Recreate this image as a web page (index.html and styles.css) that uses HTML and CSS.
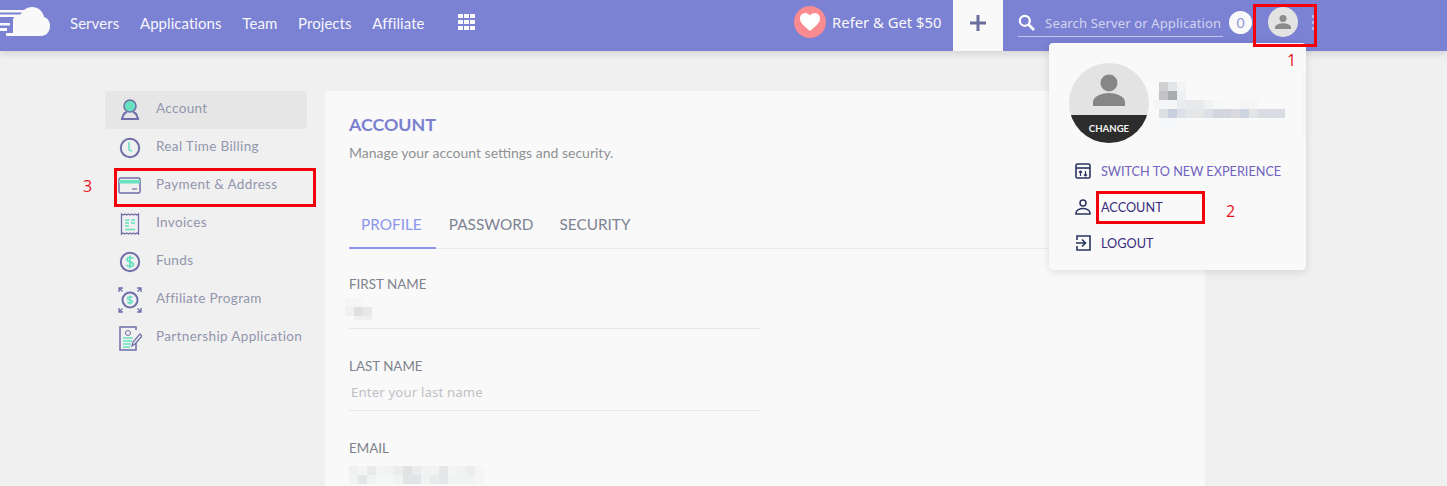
FILE: index.html
```html
<!DOCTYPE html>
<html lang="en">
<head>
<meta charset="utf-8">
<title>Account</title>
<link rel="stylesheet" href="styles.css">
</head>
<body>
<header class="topbar">
  <svg class="logo" width="51" height="30" viewBox="0 7 51 30"><path fill="#f9f9f9" d="M13 36V20c0-3 4-5 8-6 2-4 6-7 11-7 6 0 11 4 12 10 4 1 6 5 6 9 0 6-4 10-9 10zM0 10h24v2.500H0zM0 14.500h19V17H0zM0 23h10v2.500H0zM0 28h7v3H0zM6 33h8v3H6z"/></svg>
  <nav class="nav">
    <a class="nav-link">Servers</a>
    <a class="nav-link">Applications</a>
    <a class="nav-link">Team</a>
    <a class="nav-link">Projects</a>
    <a class="nav-link">Affiliate</a>
  </nav>
  <svg class="apps" width="17" height="17" viewBox="0 0 17 17" fill="#f9f9f9"><rect width="5" height="4"/><rect x="6" width="5" height="4"/><rect x="12" width="5" height="4"/><rect y="6" width="5" height="4"/><rect x="6" y="6" width="5" height="4"/><rect x="12" y="6" width="5" height="4"/><rect y="12" width="5" height="4"/><rect x="6" y="12" width="5" height="4"/><rect x="12" y="12" width="5" height="4"/></svg>
  <div class="refer">
    <span class="heart"><svg width="20" height="18" viewBox="0 0 20 18"><path fill="#fff" d="M10 18C4 13 0 10 0 5.500 0 2.300 2.400 0 5.300 0 7.200 0 9 1 10 2.600 11 1 12.800 0 14.700 0 17.600 0 20 2.300 20 5.500 20 10 16 13 10 18z"/></svg></span>
    <span class="refer-text">Refer &amp; Get $50</span>
  </div>
  <div class="add"><svg width="18" height="18" viewBox="0 0 18 18"><path fill="#6b6f9e" d="M7.500 1h3v6.500H17v3h-6.500V17h-3v-6.500H1v-3h6.500z"/></svg></div>
  <div class="search">
    <svg width="17" height="17" viewBox="0 0 17 17"><circle cx="6.800" cy="6.800" r="5" fill="none" stroke="#fff" stroke-width="2.200"/><path d="M10.500 10.500 16 16" stroke="#fff" stroke-width="2.600"/></svg>
    <span class="search-text">Search Server or Application</span>
  </div>
  <span class="count">0</span>
  <span class="avatar-small"><svg width="16" height="14" viewBox="0 0 16 14"><circle cx="8" cy="3.500" r="3.500" fill="#8c8c8c"/><path fill="#8c8c8c" d="M0 14v-2c0-2.500 5-3.800 8-3.800s8 1.300 8 3.800v2z"/></svg></span>
  <span class="dots"><i></i><i></i><i></i></span>
</header>

<main class="page">
  <aside class="side">
    <a class="side-item side-active">
      <svg class="side-icon" width="24" height="24" viewBox="0 0 24 24"><circle cx="12" cy="8" r="6" fill="#67e0c0" stroke="#6f6ea8" stroke-width="1.500"/><path d="M4 21l1-3c.5-2 2.500-3.500 4-4M20 21l-1-3c-.5-2-2.500-3.500-4-4M3 21h18" fill="none" stroke="#6f6ea8" stroke-width="2"/></svg>
      <span>Account</span>
    </a>
    <a class="side-item">
      <svg class="side-icon" width="24" height="24" viewBox="0 0 24 24"><circle cx="12" cy="12" r="9.200" fill="none" stroke="#6f6ea8" stroke-width="2"/><path d="M11 6v8l3 1" fill="none" stroke="#67e0c0" stroke-width="1.500"/></svg>
      <span>Real Time Billing</span>
    </a>
    <a class="side-item">
      <svg class="side-icon" width="24" height="24" viewBox="0 0 24 24"><rect x="1" y="4" width="21" height="15" rx="1.500" fill="none" stroke="#6f6ea8" stroke-width="1.500"/><rect x="1" y="6" width="21" height="3.500" fill="#67e0c0"/><path d="M14 15h5" stroke="#6f6ea8" stroke-width="1.200"/></svg>
      <span>Payment &amp; Address</span>
    </a>
    <a class="side-item">
      <svg class="side-icon" width="24" height="24" viewBox="0 0 24 24"><path d="M3.500 2l1.700 1 1.700-1 1.700 1 1.700-1L12 3l1.700-1 1.700 1 1.700-1 1.700 1 1.700-1V22l-1.700-1-1.700 1-1.700-1-1.700 1-1.700-1-1.700 1-1.700-1-1.700 1-1.700-1-1.700 1z" fill="none" stroke="#6f6ea8" stroke-width="1.300"/><path d="M7 8h4M7 11h4M7 14h4M13 8h4M13 11h4M7 17.500h10" stroke="#67e0c0" stroke-width="1.600"/></svg>
      <span>Invoices</span>
    </a>
    <a class="side-item">
      <svg class="side-icon" width="24" height="24" viewBox="0 0 24 24"><circle cx="12" cy="12" r="9.200" fill="none" stroke="#6f6ea8" stroke-width="2"/><path d="M15.500 8.500c-1-1.500-6-1.800-6.500.8-.5 3 6.800 2 6.500 5.200-.3 2.500-5.500 2.300-7 .5M12 5.500v13" fill="none" stroke="#67e0c0" stroke-width="1.800"/></svg>
      <span>Funds</span>
    </a>
    <a class="side-item">
      <svg class="side-icon" width="24" height="26" viewBox="0 0 24 26"><circle cx="12" cy="13" r="7.500" fill="none" stroke="#6f6ea8" stroke-width="2"/><path d="M14.500 10.500c-1-1-4.500-1-5 .8-.3 2 5.200 1.500 5 3.700-.3 1.800-4 1.500-5.200.3M12 8.500v9" fill="none" stroke="#67e0c0" stroke-width="1.500"/><path d="M1 5V1h4M1 1l3.500 3.500M23 5V1h-4M23 1l-3.500 3.500M1 21v4h4M1 25l3.500-3.500M23 21v4h-4M23 25l-3.500-3.500" fill="none" stroke="#6f6ea8" stroke-width="1.300"/></svg>
      <span>Affiliate Program</span>
    </a>
    <a class="side-item">
      <svg class="side-icon" width="24" height="25" viewBox="0 0 24 25"><path d="M18 4V1H2v23h16v-8" fill="none" stroke="#6f6ea8" stroke-width="1.500"/><circle cx="10" cy="7" r="2.500" fill="none" stroke="#6f6ea8"/><path d="M5 12h10M5 15h9M5 18h8M5 21h7" stroke="#67e0c0" stroke-width="1.300"/><path d="M14 20l1-4 7-8 2 2-7 8z" fill="#f0f0f0" stroke="#6f6ea8" stroke-width="1.200"/></svg>
      <span>Partnership Application</span>
    </a>
  </aside>

  <section class="panel">
    <h1 class="panel-title">ACCOUNT</h1>
    <p class="panel-sub">Manage your account settings and security.</p>
    <div class="tabs">
      <a class="tab tab-active">PROFILE</a>
      <a class="tab">PASSWORD</a>
      <a class="tab">SECURITY</a>
    </div>
    <div class="field">
      <label class="field-label">FIRST NAME</label>
      <div class="field-value">
        <svg class="mosaic-first" width="27" height="22" viewBox="0 0 27 22"><rect x="0" y="0" width="18" height="9" fill="#f5f5f5"/><rect x="0" y="9" width="9" height="9" fill="#f0f0f1"/><rect x="9" y="9" width="9" height="9" fill="#e2dfe1"/><rect x="18" y="9" width="9" height="9" fill="#e6e8e9"/><rect x="9" y="18" width="9" height="4" fill="#f0f0f1"/><rect x="18" y="18" width="9" height="4" fill="#efefef"/></svg>
      </div>
    </div>
    <div class="field">
      <label class="field-label">LAST NAME</label>
      <div class="field-value"><span class="placeholder">Enter your last name</span></div>
    </div>
    <div class="field">
      <label class="field-label">EMAIL</label>
      <div class="field-value field-open">
        <svg width="135" height="18" viewBox="0 0 135 18"><rect width="135" height="18" fill="#f1f2f2"/><rect x="0" width="9" height="9" fill="#eef0f1"/><rect x="9" width="9" height="9" fill="#f3f4f4"/><rect x="18" width="9" height="9" fill="#e9eaeb"/><rect x="27" width="9" height="9" fill="#f3f4f4"/><rect x="45" width="9" height="9" fill="#ebecec"/><rect x="54" width="9" height="9" fill="#e1e2e3"/><rect x="63" width="9" height="9" fill="#eaecee"/><rect x="90" width="9" height="9" fill="#e5e6e8"/><rect x="99" width="9" height="9" fill="#f3f4f4"/><rect x="117" width="9" height="9" fill="#ecedee"/><rect x="126" width="9" height="18" fill="#f5f5f6"/><rect x="9" y="9" width="9" height="9" fill="#e5e6e7"/><rect x="27" y="9" width="18" height="9" fill="#f5f6f6"/><rect x="54" y="9" width="9" height="9" fill="#e3e4e6"/><rect x="63" y="9" width="9" height="9" fill="#e1e4e6"/><rect x="81" y="9" width="9" height="9" fill="#e9eaec"/><rect x="90" y="9" width="9" height="9" fill="#e6e7e9"/></svg>
      </div>
    </div>
  </section>
</main>

<div class="menu">
  <div class="menu-user">
    <div class="menu-avatar">
      <svg width="34" height="34" viewBox="0 0 34 34"><circle cx="17" cy="9" r="8.500" fill="#868686"/><path fill="#868686" d="M1 32v-4c0-6 10-9 16-9s16 3 16 9v4z"/></svg>
      <span class="menu-change">CHANGE</span>
    </div>
    <svg class="menu-mosaic" width="131" height="45" viewBox="0 0 131 45"><rect x="5" width="9" height="9" fill="#d0d0d3"/><rect x="14" width="9" height="9" fill="#e1e5e8"/><rect x="23" width="9" height="9" fill="#f3f4f4"/><rect x="5" y="9" width="9" height="9" fill="#c3c3c7"/><rect x="14" y="9" width="9" height="9" fill="#a9abaf"/><rect x="23" y="9" width="9" height="9" fill="#eef1f4"/><rect y="18" width="23" height="9" fill="#f4f5f6"/><rect x="23" y="18" width="9" height="9" fill="#eaebee"/><rect x="32" y="18" width="18" height="9" fill="#e8e9eb"/><rect x="50" y="18" width="9" height="9" fill="#f0f1f3"/><rect x="59" y="18" width="9" height="9" fill="#f6f7f7"/><rect x="86" y="18" width="18" height="9" fill="#f5f5f5"/><rect x="5" y="27" width="9" height="9" fill="#dcdfe0"/><rect x="14" y="27" width="9" height="9" fill="#c9cfdf"/><rect x="23" y="27" width="9" height="9" fill="#dfe1e8"/><rect x="32" y="27" width="18" height="9" fill="#e5e6e8"/><rect x="50" y="27" width="9" height="9" fill="#dde0e7"/><rect x="59" y="27" width="18" height="9" fill="#d3d6de"/><rect x="77" y="27" width="9" height="9" fill="#d8dae0"/><rect x="86" y="27" width="9" height="9" fill="#cfd5e0"/><rect x="95" y="27" width="9" height="9" fill="#e2e4e6"/><rect x="104" y="27" width="27" height="9" fill="#d9dce3"/><rect x="5" y="36" width="18" height="9" fill="#f6f7f8"/></svg>
    <span class="menu-scroll"></span>
  </div>
  <a class="menu-item menu-switch">
    <svg width="16" height="16" viewBox="0 0 16 16"><rect x="1" y="1" width="14" height="14" rx="1.500" fill="none" stroke="#2a3560" stroke-width="1.600"/><path d="M1 5h14" stroke="#2a3560" stroke-width="1.600"/><path d="M5.500 13V8M4 9.500l1.500-1.500 1.500 1.500M10.500 8v5M9 11.500l1.500 1.500 1.500-1.500" fill="none" stroke="#2a3560" stroke-width="1.200"/></svg>
    <span>SWITCH TO NEW EXPERIENCE</span>
  </a>
  <a class="menu-item">
    <svg width="16" height="16" viewBox="0 0 16 16"><circle cx="8" cy="4" r="3" fill="none" stroke="#2a3560" stroke-width="1.500"/><path d="M1 15v-1c0-3 4-4.500 7-4.500s7 1.500 7 4.500v1z" fill="none" stroke="#2a3560" stroke-width="1.500"/></svg>
    <span>ACCOUNT</span>
  </a>
  <a class="menu-item">
    <svg width="16" height="16" viewBox="0 0 16 16"><path d="M2 5V1h13v14H2v-4" fill="none" stroke="#2a3560" stroke-width="1.600"/><path d="M1 8h9M7 4.500 10.500 8 7 11.500" fill="none" stroke="#2a3560" stroke-width="1.600"/></svg>
    <span>LOGOUT</span>
  </a>
</div>

<span class="mark mark-one"></span>
<span class="mark mark-two"></span>
<span class="mark mark-three"></span>
<span class="mark-num num-one">1</span>
<span class="mark-num num-two">2</span>
<span class="mark-num num-three">3</span>
</body>
</html>
```
FILE: styles.css
```css
* { box-sizing: border-box; }
html, body { margin: 0; height: 486px; overflow: hidden; }
body { background: #f0f0f0; font-family: Lato, "Open Sans", sans-serif; position: relative; }
.topbar { height: 51px; background: #7b81d3; display: flex; align-items: center; box-shadow: 0 2px 8px rgba(0,0,0,.14); position: relative; }
.logo { align-self: flex-start; margin-top: 7px; flex: none; }
.nav { display: flex; gap: 20.800px; margin-left: 19px; margin-top: -6px; }
.nav-link { color: #f6f6fb; font-size: 15px; letter-spacing: .05px; }
.apps { margin-left: 33.600px; margin-top: -7px; flex: none; }
.refer { display: flex; align-items: center; gap: 6px; margin-left: 319px; margin-top: -7px; width: 159px; }
.heart { width: 32px; height: 32px; border-radius: 50%; background: #f98b91; display: flex; align-items: center; justify-content: center; }
.refer-text { color: #f9f9f9; font: 14.800px "Noto Sans", sans-serif; white-space: nowrap; }
.add { width: 50px; height: 51px; background: #f9f9f9; display: flex; align-items: center; justify-content: center; padding-bottom: 5px; }
.search { width: 205px; height: 37px; margin-left: 15px; margin-bottom: 14px; display: flex; align-items: center; gap: 9px; border-bottom: 1px solid #c3c6e9; padding-top: 9px; }
.search-text { color: #d2d4ef; font: 13.100px "Noto Sans", sans-serif; white-space: nowrap; letter-spacing: .1px; margin-left: 1px; }
.count { width: 23px; height: 23px; border-radius: 50%; background: #f9f9f9; color: #8f94db; font-size: 14px; display: flex; align-items: center; justify-content: center; margin-left: 6px; margin-top: -6px; }
.avatar-small { width: 30px; height: 30px; border-radius: 50%; background: #e3e3e3; display: flex; align-items: center; justify-content: center; margin-left: 16px; margin-top: -7px; }
.dots { display: flex; flex-direction: column; gap: 3px; margin-left: 14px; margin-top: -7px; }
.dots i { width: 3px; height: 3px; background: #b9bce6; }

.page { display: flex; gap: 18px; padding: 40px 0 0 105px; }
.side { width: 202px; flex: none; display: flex; flex-direction: column; }
.side-item { height: 38px; display: flex; align-items: center; gap: 14px; padding-left: 13px; color: #9296ad; font-size: 13.500px; letter-spacing: .35px; border-radius: 3px; white-space: nowrap; }
.side-item span { margin-bottom: 4px; }
.side-active { background: #e6e6e6; }
.side-icon { flex: none; }
.panel { width: 880px; height: 420px; background: #f9f9f9; border-radius: 4px 4px 0 0; padding: 23px 24px; }
.panel-title { margin: 0; font-size: 17.800px; line-height: 21px; font-weight: 700; color: #7b80cf; }
.panel-sub { margin: 9px 0 0; font-size: 14px; line-height: 18px; color: #8f9194; }
.tabs { display: flex; border-bottom: 1px solid #ececec; margin-top: 36px; width: 832px; height: 51px; }
.tab { height: 51px; padding: 0 13px; font-size: 15.350px; line-height: 52px; color: #7d8393; }
.tab-active { color: #8d96ec; border-bottom: 2px solid #8d96ec; padding-left: 12px; padding-right: 14px; }
.field { margin-top: 27px; width: 412px; }
.field + .field { margin-top: 29px; }
.field-label { display: block; font-size: 13.400px; line-height: 17px; color: #80838d; }
.field-value { height: 36px; border-bottom: 1px solid #e6e6e6; display: flex; align-items: center; }
.field-open { border-bottom: 0; }
.mosaic-first { margin-left: -4px; align-self: flex-start; margin-top: 5px; }
.placeholder { margin: 0 0 2px 2px; color: #bfc0c6; font: 13.200px "Noto Sans", sans-serif; letter-spacing: .15px; }

.menu { position: absolute; left: 1049px; top: 43px; width: 257px; height: 227px; background: #f9f9f9; border-radius: 4px; box-shadow: 0 2px 8px rgba(0,0,0,.12); padding: 20px 20px 0; }
.menu-user { display: flex; align-items: flex-start; gap: 5px; height: 90px; position: relative; }
.menu-avatar { width: 80px; height: 80px; border-radius: 50%; background: #e3e3e3; overflow: hidden; position: relative; display: flex; justify-content: center; padding-top: 11px; flex: none; }
.menu-change { position: absolute; left: 0; right: 0; bottom: 0; height: 28px; background: #2d2d2d; color: #f4f4f4; font-size: 9.600px; font-weight: 700; text-align: center; line-height: 27px; }
.menu-mosaic { margin-top: 19px; flex: none; }
.menu-scroll { position: absolute; right: -20px; top: 10px; width: 3px; height: 65px; background: #f5f5f5; }
.menu-item { display: flex; align-items: center; gap: 10px; height: 36px; margin-left: 6px; font-size: 12.700px; color: #3a2d7d; white-space: nowrap; }
.menu-switch { color: #6f63bd; }

.mark { position: absolute; border: 3px solid #f5000a; }
.mark-one { left: 1253px; top: 4px; width: 64px; height: 43px; }
.mark-two { left: 1096px; top: 191px; width: 109px; height: 33px; }
.mark-three { left: 114px; top: 168px; width: 202px; height: 39px; }
.mark-num { position: absolute; color: #e8141c; font: 16px "Open Sans", sans-serif; }
.num-one { left: 1287px; top: 49px; }
.num-two { left: 1226px; top: 200px; }
.num-three { left: 83px; top: 175px; }
```
